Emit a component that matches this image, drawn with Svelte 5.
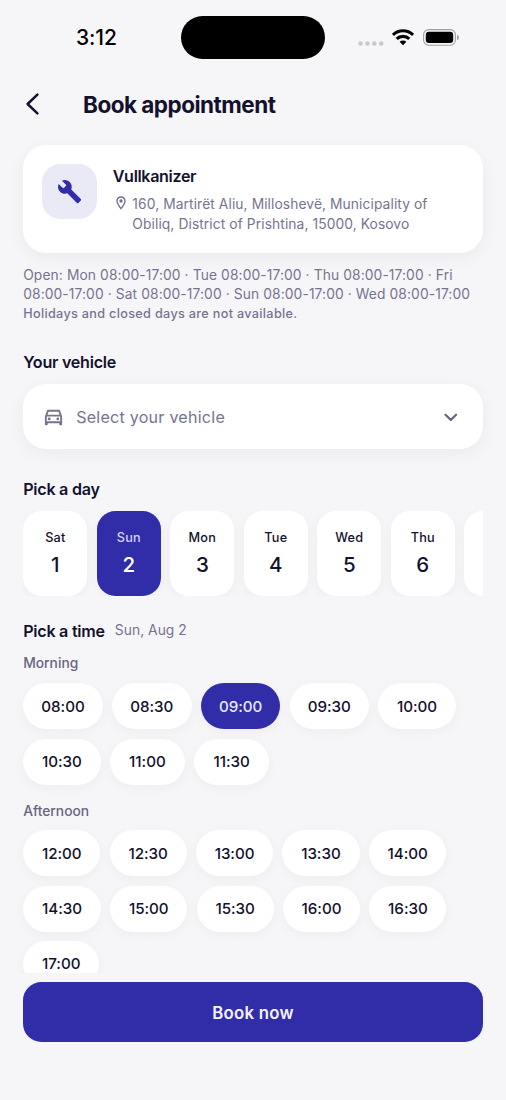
<script>
  const days = [
    ['Sat', 1], ['Sun', 2], ['Mon', 3], ['Tue', 4], ['Wed', 5], ['Thu', 6], ['', '']
  ];
  const groups = [
    { name: 'Morning', times: ['08:00', '08:30', '09:00', '09:30', '10:00', '10:30', '11:00', '11:30'] },
    { name: 'Afternoon', times: ['12:00', '12:30', '13:00', '13:30', '14:00', '14:30', '15:00', '15:30', '16:00', '16:30', '17:00'] }
  ];
  const widths = { '08': 79.6, '09': 79.6, '10': 77.5, '11': 75, '14': 77.8, '17': 76 };
  const chipWidth = (t) => widths[t.slice(0, 2)] ?? 77.2;
  let day = $state(2);
  let time = $state('09:00');
</script>

<div class="screen">
  <div class="status">
    <span class="clock">3:12</span>
    <div class="island"></div>
    <div class="indicators">
      <svg class="dots" width="26" height="5" viewBox="0 0 26 5" fill="#c9c9cc">
        <circle cx="2.5" cy="2.5" r="2.3" /><circle cx="9.4" cy="2.5" r="2.3" /><circle cx="16.3" cy="2.5" r="2.3" /><circle cx="23.2" cy="2.5" r="2.3" />
      </svg>
      <svg class="wifi" width="22" height="17" viewBox="0 0 22 17" fill="none" stroke="#000" stroke-width="3.1">
        <path d="M1 5.9a14.2 14.2 0 0 1 20 0" />
        <path d="M4.7 9.9a9 9 0 0 1 12.6 0" />
        <path d="M7.6 12.8a4.9 4.9 0 0 1 6.8 0L11 16.2z" fill="#000" stroke="none" />
      </svg>
      <svg width="37" height="17" viewBox="0 0 37 17">
        <rect x=".6" y=".6" width="31.8" height="15.6" rx="5" fill="none" stroke="#a0a0a3" stroke-width="1.1" />
        <rect x="2.8" y="2.8" width="27.4" height="11.2" rx="3.2" />
        <path d="M34 5.7c2.6.8 2.6 4.7 0 5.5z" fill="#a0a0a3" />
      </svg>
    </div>
  </div>

  <header>
    <svg class="back" width="16" height="24" viewBox="0 0 16 24" fill="none" stroke="#14112d" stroke-width="2.5" stroke-linecap="round" stroke-linejoin="round"><path d="M12.4 2.6 2.6 12l9.8 9.4" /></svg>
    <h1>Book appointment</h1>
  </header>

  <main>
    <section class="shop">
      <div class="badge">
        <svg width="25.3" height="25.3" viewBox="0 0 24 24" fill="#312da8"><path d="M22.61 19l-9.08-9.08c.93-2.34.45-5.1-1.44-7C10.1 1 7.1.5 4.7 1.6l3.6 3.6c.5.5.5 1 .1 1.400L6.700 8.300c-.400.400-1 .400-1.400 0L1.600 4.700C.400 7.100.900 10.100 2.900 12.110c1.860 1.860 4.570 2.350 6.890 1.480l9.110 9.110c.390.390 1.020.390 1.410 0l2.300-2.300c.400-.380.400-1.010 0-1.400z" /></svg>
      </div>
      <div class="details">
        <h2>Vullkanizer</h2>
        <div class="address">
          <svg width="16" height="16" viewBox="0 0 24 24" fill="#77738f"><path d="M12 2C8.13 2 5 5.13 5 9c0 5.25 7 13 7 13s7-7.75 7-13c0-3.87-3.13-7-7-7zM7 9c0-2.76 2.24-5 5-5s5 2.24 5 5c0 2.88-2.88 7.19-5 9.88C9.92 16.21 7 11.85 7 9z" /><circle cx="12" cy="9" r="2.5" /></svg>
          <p>160, Martirët Aliu, Milloshevë, Municipality of<br />Obiliq, District of Prishtina, 15000, Kosovo</p>
        </div>
      </div>
    </section>

    <p class="hours">Open: Mon 08:00-17:00 · Tue 08:00-17:00 · Thu 08:00-17:00 · Fri<br />08:00-17:00 · Sat 08:00-17:00 · Sun 08:00-17:00 · Wed 08:00-17:00</p>
    <p class="note">Holidays and closed days are not available.</p>

    <h2 class="vehicle-title">Your vehicle</h2>
    <div class="select">
      <svg width="23" height="23" viewBox="0 0 24 24" fill="#77738f"><path fill-rule="evenodd" d="M18.92 6.01C18.72 5.42 18.16 5 17.5 5h-11c-.66 0-1.21.42-1.42 1.01L3 12v8c0 .55.45 1 1 1h1c.55 0 1-.45 1-1v-1h12v1c0 .55.45 1 1 1h1c.55 0 1-.45 1-1v-8l-2.08-5.99zM6.85 7h10.29l1.08 3.11H5.77L6.85 7zM19 17H5v-5h14v5z" /><circle cx="7.5" cy="14.5" r="1.5" /><circle cx="16.5" cy="14.5" r="1.5" /></svg>
      <span>Select your vehicle</span>
      <svg width="16" height="10" viewBox="0 0 16 10" fill="none" stroke="#69657f" stroke-width="2.2" stroke-linecap="round" stroke-linejoin="round"><path d="m2.5 2.7 5.3 5.2 5.300-5.200" /></svg>
    </div>

    <h2 class="day-title">Pick a day</h2>
    <div class="days">
      {#each days as [name, date]}
        <button class="day" class:selected={day === date} onclick={() => (day = date)}>
          <span>{name}</span><b>{date}</b>
        </button>
      {/each}
    </div>

    <div class="time-title">
      <h2>Pick a time</h2><span>Sun, Aug 2</span>
    </div>
    {#each groups as group}
      <h3>{group.name}</h3>
      <div class="times">
        {#each group.times as t}
          <button class="time" class:selected={time === t} style:width="{chipWidth(t)}px" onclick={() => (time = t)}>{t}</button>
        {/each}
      </div>
    {/each}
  </main>

  <button class="book">Book now</button>
</div>

<style>
  :global(body) { background: #f6f6f9; }
  .screen {
    box-sizing: border-box;
    width: 506px;
    height: 1100px;
    padding-bottom: 58px;
    display: flex;
    flex-direction: column;
    overflow: hidden;
    background: #f6f6f9;
    color: #14112d;
    font-family: Inter, sans-serif;
  }
  h1, h2, h3, p { margin: 0; }
  button { border: 0; padding: 0; font-family: inherit; color: inherit; }
  svg { display: block; flex: none; }

  .status {
    display: grid;
    grid-template-columns: 181px 144px 1fr;
    height: 75px;
    flex: none;
    align-items: center;
    color: #000;
  }
  .clock { padding-left: 76px; font-size: 21px; font-weight: 550; letter-spacing: -.1px; line-height: 24px; }
  .island { height: 43px; border-radius: 22px; background: #000; }
  .indicators { display: flex; align-items: center; padding-left: 33px; }
  .dots { margin-top: 11px; }
  .wifi { margin: 0 9px 0 8px; }

  header { display: flex; align-items: center; height: 60px; flex: none; padding-left: 24.5px; }
  .back { margin-top: -2px; }
  h1 { margin-left: 42.5px; font-size: 22.5px; font-weight: 700; letter-spacing: -.51px; line-height: 28px; }
  h2 { font-size: 16.1px; font-weight: 600; letter-spacing: -.25px; line-height: 22px; }

  main { flex: 1; min-height: 0; padding: 10.2px 23.2px 0; overflow: hidden; }
  .shop {
    box-sizing: border-box;
    display: flex;
    height: 107.6px;
    padding: 18.4px;
    gap: 16px;
    border-radius: 23px;
    background: #fff;
    box-shadow: 0 5px 18px rgba(20, 17, 45, .05);
  }
  .badge {
    display: grid;
    place-items: center;
    width: 55.2px;
    height: 55.2px;
    flex: none;
    border-radius: 18.4px;
    background: #eae9f6;
  }
  .details h2 { margin-top: 1px; letter-spacing: -.35px; }
  .address { display: flex; gap: 3.6px; margin-top: 7px; color: #77738f; font-size: 13.8px; letter-spacing: .09px; line-height: 20.7px; white-space: nowrap; }
  .address svg { margin-top: 1px; }

  .hours { margin-top: 12.8px; color: #77738f; font-size: 13.8px; letter-spacing: .11px; line-height: 19.5px; white-space: nowrap; }
  .note { color: #77738f; font-size: 12.65px; font-weight: 550; letter-spacing: .33px; line-height: 18.6px; }

  .vehicle-title { margin-top: 28px; }
  .select {
    box-sizing: border-box;
    display: flex;
    align-items: center;
    height: 64.4px;
    margin-top: 11.2px;
    padding: 0 24px 0 18.4px;
    border-radius: 23px;
    background: #fff;
    box-shadow: 0 5px 18px rgba(20, 17, 45, .05);
    color: #77738f;
    font-size: 16.1px;
    letter-spacing: .23px;
  }
  .select span { flex: 1; margin-left: 11.6px; }

  .day-title { margin-top: 29.3px; }
  .days { display: flex; gap: 9.2px; height: 85px; margin-top: 11px; overflow: hidden; }
  .day {
    display: flex;
    flex-direction: column;
    align-items: center;
    justify-content: center;
    flex: none;
    width: 64.3px;
    height: 85px;
    border-radius: 18.4px;
    background: #fff;
    box-shadow: 0 3px 12px rgba(20, 17, 45, .04);
  }
  .day span { font-size: 12.7px; font-weight: 500; letter-spacing: .2px; line-height: 18px; }
  .day b { margin-top: 4px; font-size: 20.5px; font-weight: 500; line-height: 28px; }
  .day.selected span { color: #d4d3f2; }
  .selected { background: #312da8 !important; color: #fff; }

  .time-title { display: flex; gap: 10px; height: 22px; margin-top: 23.7px; }
  .time-title span { color: #77738f; font-size: 13.8px; letter-spacing: .05px; line-height: 20px; }
  h3 { margin-top: 11.7px; font-size: 13.8px; font-weight: 450; color: #69657f; line-height: 20px; }
  .times { display: flex; flex-wrap: wrap; gap: 9.2px; margin-top: 9.9px; }
  .times + h3 { margin-top: 16px; }
  .time {
    height: 46px;
    border-radius: 23px;
    background: #fff;
    box-shadow: 0 3px 12px rgba(20, 17, 45, .04);
    font-size: 15.2px;
    font-weight: 500;
    letter-spacing: -.05px;
  }
  .time.selected { color: #e9e9fb; }

  .book {
    height: 59.8px;
    flex: none;
    margin: 9px 23.2px 0;
    padding-top: 1px;
    border-radius: 18.4px;
    background: #312da8;
    color: #f3f3ff;
    font-size: 16.8px;
    font-weight: 600;
    letter-spacing: .25px;
  }
</style>
